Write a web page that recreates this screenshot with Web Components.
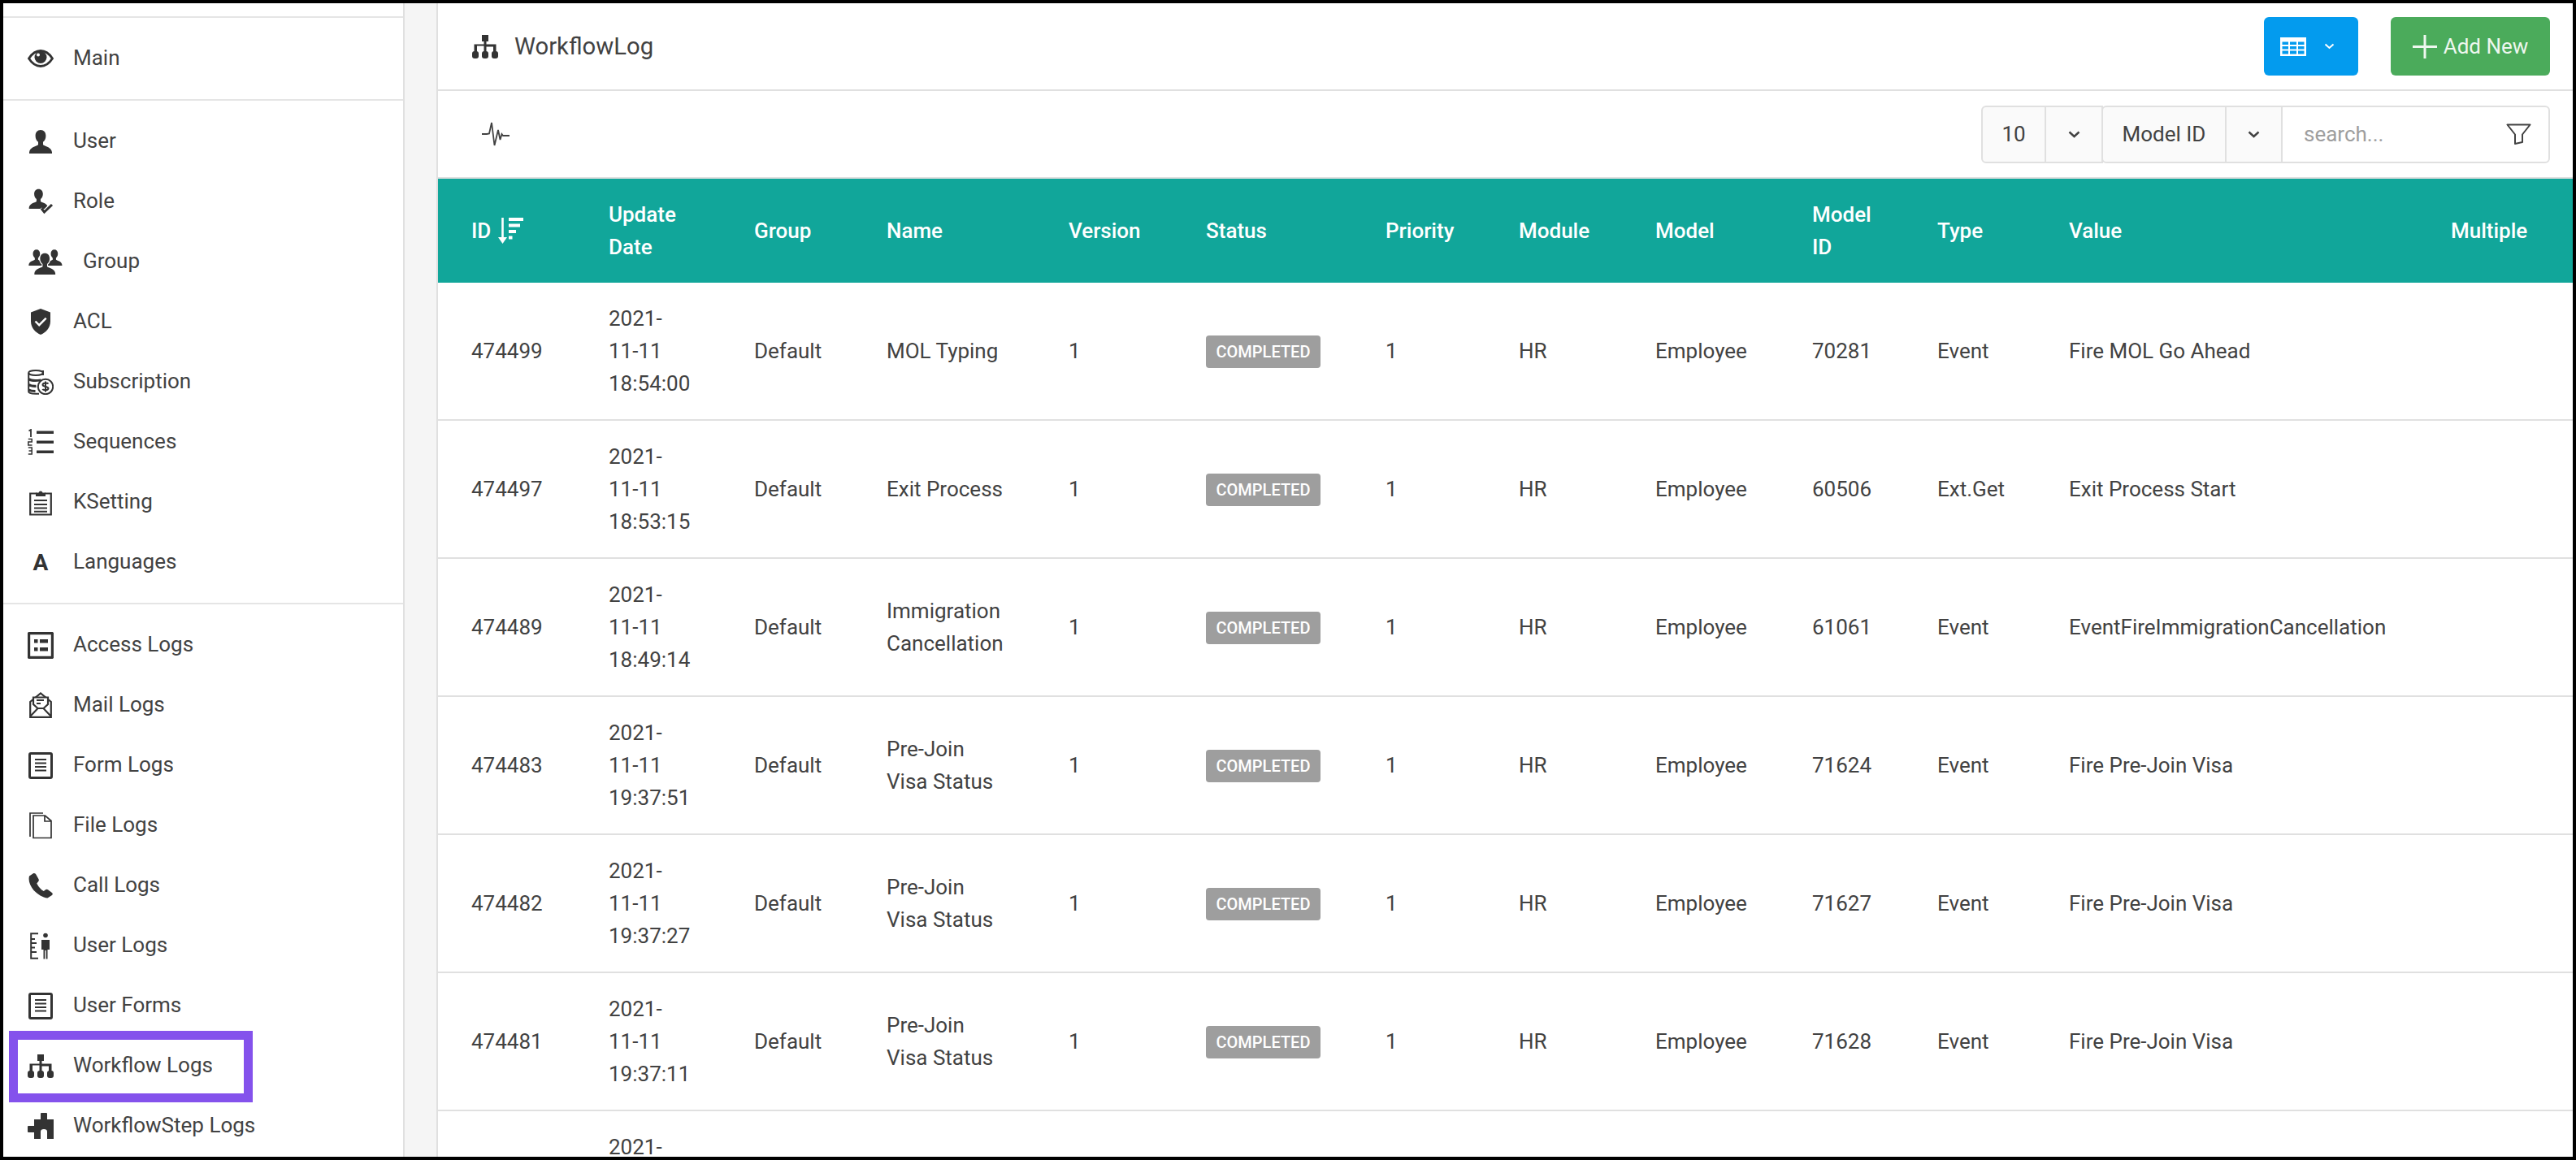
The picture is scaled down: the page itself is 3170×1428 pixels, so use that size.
<!DOCTYPE html>
<html lang="en">
<head>
<meta charset="utf-8">
<title>WorkflowLog</title>
<style>
  html, body { margin: 0; height: 100%; overflow: hidden; background: #000; }
  body { font-family: Roboto, "Liberation Sans", sans-serif; }
</style>
</head>
<body>
<app-frame>
  <side-nav slot="nav">
    <nav-group>
      <nav-item icon="eye">Main</nav-item>
    </nav-group>
    <nav-group>
      <nav-item icon="user">User</nav-item>
      <nav-item icon="role">Role</nav-item>
      <nav-item icon="group">Group</nav-item>
      <nav-item icon="shield">ACL</nav-item>
      <nav-item icon="subscription">Subscription</nav-item>
      <nav-item icon="sequences">Sequences</nav-item>
      <nav-item icon="clipboard">KSetting</nav-item>
      <nav-item icon="letter">Languages</nav-item>
    </nav-group>
    <nav-group>
      <nav-item icon="list">Access Logs</nav-item>
      <nav-item icon="mail">Mail Logs</nav-item>
      <nav-item icon="form">Form Logs</nav-item>
      <nav-item icon="files">File Logs</nav-item>
      <nav-item icon="phone">Call Logs</nav-item>
      <nav-item icon="userlog">User Logs</nav-item>
      <nav-item icon="form">User Forms</nav-item>
      <nav-item icon="sitemap" highlight>Workflow Logs</nav-item>
      <nav-item icon="puzzle">WorkflowStep Logs</nav-item>
    </nav-group>
  </side-nav>
  <page-header slot="main">WorkflowLog</page-header>
  <list-toolbar slot="main"></list-toolbar>
  <log-table slot="main"></log-table>
</app-frame>

<script>
(() => {
  const person = 'M16 2c-4 0-6.400 3-6.400 7.300 0 3.400 1.400 6 3.400 7.500v3.400C10 22.300 2.500 23.300 2 29.500V31h28v-1.500c-.5-6.200-8-7.200-11-9.300v-3.400c2-1.500 3.400-4.100 3.400-7.500C22.400 5 20 2 16 2z';

  // every icon: [width, height, inner svg], drawn 1:1 in pixels
  const ICONS = {
    eye: [32, 22, `<path d="M1.500 11C6 4 11 1.500 16 1.500S26 4 30.500 11C26 18 21 20.500 16 20.500S6 18 1.500 11z" fill="none" stroke="currentColor" stroke-width="2.800"/><circle cx="16" cy="9.500" r="7.500"/><circle cx="13" cy="6.500" r="2" fill="#fff"/>`],
    user: [32, 32, `<path d="${person}"/>`],
    role: [32, 32, `<g transform="translate(0 -1) scale(.84)"><path d="${person}"/></g><path d="M15 25.500l4.500 5 11-11" fill="none" stroke="#fff" stroke-width="6"/><path d="M17 24.500l3.500 4.500 9.500-9" fill="none" stroke="currentColor" stroke-width="3"/>`],
    group: [44, 32, `<g transform="scale(.68)"><path d="${person}"/></g><g transform="translate(22 0) scale(.68)"><path d="${person}"/></g><g transform="translate(6.500 4) scale(.92 .9)"><path d="${person}" stroke="#fff" stroke-width="2.500" paint-order="stroke"/></g>`],
    shield: [26, 34, `<path d="M13 1l12 4.500v11C25 25 19 30.500 13 33 7 30.500 1 25 1 16.500v-11z"/><path d="M6.500 16.500l4.700 4.700 8.500-8.500" fill="none" stroke="#fff" stroke-width="2.400"/>`],
    subscription: [32, 31, `<g fill="none" stroke="currentColor"><ellipse cx="10" cy="4" rx="8.800" ry="3" stroke-width="2"/><path d="M1.200 4v23c0 1.800 4 2.800 8.800 2.800h4" stroke-width="2"/><path d="M1.500 11.500c2 2 7 2.500 15 1.500M1.500 18.500c2 1.500 5 2 9 1.800M1.500 25c2 1.200 4 1.500 8 1.500" stroke-width="3.200"/><path d="M19 1v6" stroke-width="2"/></g><circle cx="22" cy="21" r="9.200" fill="#fff" stroke="currentColor" stroke-width="2"/><path d="M25.500 17.500c-1-1.300-7-1.500-7 1.300 0 2.900 7 1.300 7 4.200 0 2.800-6 2.700-7.200 1M22 14.500v13" fill="none" stroke="currentColor" stroke-width="2"/>`],
    sequences: [32, 32, `<path d="M11 2.500h21v3.400H11zM11 14.500h21v3.400H11zM11 26.500h21v3.400H11z"/><path d="M1.500 2.500L4 1v9" fill="none" stroke="currentColor" stroke-width="1.800"/><path d="M.8 12.500H5.200V16H.8v4H5.500" fill="none" stroke="currentColor" stroke-width="1.500"/><path d="M.8 23H5.200v8H.8M1.500 27H5.200" fill="none" stroke="currentColor" stroke-width="1.500"/>`],
    clipboard: [28, 33, `<path d="M9 5.500H1.200v26h25.600v-26H19" fill="none" stroke="currentColor" stroke-width="2.200"/><path d="M8 9V4.500h3.500a2.600 2.600 0 0 1 5 0H20V9z"/><path d="M6 14h16M6 19h16M6 23.500h16M6 27.800h16" stroke="currentColor" stroke-width="2"/>`],
    list: [32, 33, `<rect x="1.500" y="1.500" width="29" height="30" rx="1" fill="none" stroke="currentColor" stroke-width="3.400"/><path d="M8 9h4.500v4.500H8zM15 9h10v4.500H15zM8 19h4.500v4.500H8zM15 19h10v4.500H15z"/>`],
    mail: [28, 32, `<g fill="none" stroke="currentColor" stroke-width="2.200"><path d="M1.200 12v18.800h25.600V12L14 1.500z"/><path d="M1.500 29.500l9-9.500h7l9 9.500"/><path d="M5 15V6.500h18V15L17.500 20h-7z" fill="#fff"/><path d="M9 10h9M9 14h5"/></g>`],
    form: [30, 33, `<rect x="1.500" y="1.500" width="27" height="30" rx="1.500" fill="none" stroke="currentColor" stroke-width="3"/><path d="M8 9h14M8 13.500h14M8 18h14M8 22.500h14" stroke="currentColor" stroke-width="2.200"/>`],
    files: [28, 33, `<g fill="none" stroke="currentColor" stroke-width="1.700"><path d="M5 31.500H27V10.500L19.500 4H5z"/><path d="M19 4v7h8"/><path d="M1 30V1h16"/></g>`],
    phone: [30, 31, `<path d="M5.500.500L1 3.500c-1.500 6 1 12 5.500 17.500 5 5 11 9 17 9.500l5.500-3.500c1-.8 1-2 0-3l-5-3.800c-1-.7-2-.7-3 0l-2.200 1.700c-3-1.500-7-6-8.500-9.500l2-2.400c.7-.9.700-2 .1-3L9 1c-.8-1-2.500-1.200-3.500-.5z"/>`],
    userlog: [26, 33, `<path d="M10 1.200H1.200v30.600H10M1.500 8H6M1.500 13H8M1.500 18.500H6M1.500 24H8" fill="none" stroke="currentColor" stroke-width="2"/><circle cx="19" cy="3.500" r="2.800"/><path d="M14 9h10v12h-2.500v11.500h-1.800V22h-1.400v10.500h-1.800V21H14z"/>`],
    sitemap: [32, 29, `<path d="M12 0h8v8h-2.500v3.500h12v9.500h-3.500v-6.500h-8.500V21h-3v-7.500H6V21H2.500v-9.500h12V8H12z"/><rect y="20" width="8" height="9" rx="3"/><rect x="12" y="20" width="8" height="9" rx="3"/><rect x="24" y="20" width="8" height="9" rx="3"/>`],
    puzzle: [32, 32, `<path d="M17 0h6a1 1 0 0 1 1 1v7h8v24h-8v-9a4 3 0 0 0-8 0v9H8v-8H1a1 1 0 0 1-1-1v-6a1 1 0 0 1 1-1h7V8h8V1a1 1 0 0 1 1-1z"/>`],
    chevron: [13, 8, `<path d="M1.500 1.500L6.500 6l5-4.500" fill="none" stroke="currentColor" stroke-width="2"/>`],
    caret: [15, 9, `<path d="M1.500 1.500L7.500 7l6-5.500" fill="none" stroke="currentColor" stroke-width="2.400"/>`],
    grid: [32, 23, `<path d="M0 0h32v23H0zM2.500 5.500v3.500h7.500V5.500zM12 5.500v3.500h8V5.500zM22 5.500v3.500h7.500V5.500zM2.500 11v3.500h7.500V11zM12 11v3.500h8V11zM22 11v3.500h7.500V11zM2.500 16.500v4h7.500v-4zM12 16.500v4h8v-4zM22 16.500v4h7.500v-4z" fill-rule="evenodd"/>`],
    plus: [30, 29, `<path d="M0 13h30v3H0z"/><path d="M13.500 0h3v29h-3z"/>`],
    filter: [31, 26, `<path d="M1.500 1.500h28L20 13.500v9.500l-9 2V13.500z" fill="none" stroke="currentColor" stroke-width="2" stroke-linejoin="round"/>`],
    pulse: [34, 30, `<path d="M0 15h6l3-.5L12 1l3.500 28 4.500-19 2.500 12 2-7 1.500 2h8" fill="none" stroke="currentColor" stroke-width="1.800"/>`],
    sort: [32, 32, `<path d="M6.500 0v25" stroke="currentColor" stroke-width="2.600"/><path d="M1 24h11l-5.500 8z"/><path d="M14 0h18v4H14zM14 7.500h14v4H14zM14 15h9v4h-9zM14 22.500h4.500v4H14z"/>`],
  };

  class UiIcon extends HTMLElement {
    connectedCallback() {
      const name = this.getAttribute("name");
      const root = this.shadowRoot || this.attachShadow({ mode: "open" });
      const css = `<style>:host{display:inline-flex;align-items:center;justify-content:center;flex:none;line-height:1}svg{display:block;fill:currentColor}</style>`;
      if (name === "letter") {
        root.innerHTML = `${css}<span style="font:700 28px Roboto,sans-serif;width:32px;text-align:center">A</span>`;
        return;
      }
      const [w, h, inner] = ICONS[name];
      root.innerHTML = `${css}<svg width="${w}" height="${h}" viewBox="0 0 ${w} ${h}" aria-hidden="true">${inner}</svg>`;
    }
  }

  class AppFrame extends HTMLElement {
    constructor() {
      super();
      this.attachShadow({ mode: "open" }).innerHTML = `
        <style>
          :host {
            display: grid;
            grid-template-columns: 494px 1fr;
            box-sizing: border-box;
            width: 3170px;
            height: 1428px;
            border: 4px solid #000;
            background: #f5f5f5;
            color: #424242;
            font: 400 26px/40px Roboto, "Liberation Sans", sans-serif;
            overflow: hidden;
          }
          .main {
            margin-left: 39px;
            border-left: 2px solid #e0e0e0;
            background: #fff;
            overflow: hidden;
            min-width: 0;
          }
        </style>
        <slot name="nav"></slot>
        <div class="main"><slot name="main"></slot></div>
      `;
    }
  }

  class SideNav extends HTMLElement {
    constructor() {
      super();
      this.attachShadow({ mode: "open" }).innerHTML = `
        <style>
          :host {
            display: block;
            box-sizing: border-box;
            background: #fff;
            border-right: 2px solid #e0e0e0;
            padding-top: 16px;
            height: 100%;
            position: relative;
            overflow: hidden;
          }
        </style>
        <slot></slot>
      `;
    }
  }

  class NavGroup extends HTMLElement {
    constructor() {
      super();
      this.attachShadow({ mode: "open" }).innerHTML = `
        <style>
          :host { display: block; border-top: 2px solid #e5e5e5; padding: 13px 0; }
          :host(:last-child) { padding-bottom: 0; }
        </style>
        <slot></slot>
      `;
    }
  }

  class NavItem extends HTMLElement {
    connectedCallback() {
      if (this.shadowRoot) return;
      this.attachShadow({ mode: "open" }).innerHTML = `
        <style>
          :host {
            display: flex;
            align-items: center;
            gap: 24px;
            height: 74px;
            padding-left: 30px;
            position: relative;
            white-space: nowrap;
            color: #424242;
          }
          .icon { display: flex; min-width: 32px; justify-content: center; color: #333; }
          .label { margin-top: -2px; }
          :host([highlight])::after {
            content: "";
            position: absolute;
            left: 7px;
            top: -6px;
            width: 300px;
            height: 88px;
            box-sizing: border-box;
            border: 11px solid #8452ec;
          }
        </style>
        <span class="icon"><ui-icon name="${this.getAttribute("icon")}"></ui-icon></span>
        <span class="label"><slot></slot></span>
      `;
    }
  }

  class PageHeader extends HTMLElement {
    constructor() {
      super();
      this.attachShadow({ mode: "open" }).innerHTML = `
        <style>
          :host {
            display: flex;
            align-items: center;
            box-sizing: border-box;
            height: 108px;
            padding: 0 28px 0 42px;
            border-bottom: 2px solid #e0e0e0;
          }
          .title { display: flex; align-items: center; gap: 20px; font-size: 29.25px; flex: 1; color: #424242; }
          .title ui-icon { color: #333; }
          .btn {
            display: flex;
            align-items: center;
            box-sizing: border-box;
            height: 72px;
            border-radius: 6px;
            color: #fff;
          }
          .view { width: 116px; gap: 22px; padding-left: 20px; background: #039bee; margin-right: 40px; }
          .add { width: 196px; gap: 8px; justify-content: center; background: #4bab5b; color: #eef7ef; }
        </style>
        <div class="title"><ui-icon name="sitemap"></ui-icon><span><slot></slot></span></div>
        <div class="btn view"><ui-icon name="grid"></ui-icon><ui-icon name="chevron"></ui-icon></div>
        <div class="btn add"><ui-icon name="plus"></ui-icon><span>Add New</span></div>
      `;
    }
  }

  class ListToolbar extends HTMLElement {
    constructor() {
      super();
      this.attachShadow({ mode: "open" }).innerHTML = `
        <style>
          :host {
            display: flex;
            align-items: center;
            justify-content: space-between;
            box-sizing: border-box;
            height: 108px;
            padding: 0 28px 0 54px;
            border-bottom: 2px solid #e0e0e0;
          }
          .group { display: flex; height: 71px; }
          .seg {
            display: flex;
            align-items: center;
            justify-content: center;
            box-sizing: border-box;
            background: #fafafa;
            border: 2px solid #e0e0e0;
            margin-left: -2px;
            color: #424242;
          }
          .seg:first-child { margin-left: 0; border-radius: 6px 0 0 6px; }
          .search {
            width: 331px;
            justify-content: space-between;
            padding: 0 21px 0 26px;
            background: #fff;
            border-radius: 0 6px 6px 0;
            color: #9e9e9e;
          }
          .search ui-icon { color: #424242; }
        </style>
        <ui-icon name="pulse"></ui-icon>
        <div class="group">
          <div class="seg" style="width:80px">10</div>
          <div class="seg" style="width:72px"><ui-icon name="caret"></ui-icon></div>
          <div class="seg" style="width:154px;border-radius:6px 0 0 6px">Model ID</div>
          <div class="seg" style="width:71px"><ui-icon name="caret"></ui-icon></div>
          <div class="seg search"><span>search...</span><ui-icon name="filter"></ui-icon></div>
        </div>
      `;
    }
  }

  class StatusBadge extends HTMLElement {
    constructor() {
      super();
      this.attachShadow({ mode: "open" }).innerHTML = `
        <style>
          :host {
            display: inline-block;
            box-sizing: border-box;
            height: 40px;
            min-width: 141px;
            text-align: center;
            border-radius: 4px;
            background: #9e9e9e;
            color: #fff;
            font-size: 20px;
            font-weight: 500;
            line-height: 40px;
            vertical-align: middle;
          }
        </style>
        <slot></slot>
      `;
    }
  }

  const COLUMNS = [
    ["ID", 210], ["Update<br>Date", 179], ["Group", 163], ["Name", 224], ["Version", 169],
    ["Status", 221], ["Priority", 164], ["Module", 168], ["Model", 193], ["Model<br>ID", 154],
    ["Type", 162], ["Value", 470], ["Multiple", 150],
  ];

  const ROWS = [
    ["474499", "18:54:00", "MOL Typing", "70281", "Event", "Fire MOL Go Ahead"],
    ["474497", "18:53:15", "Exit Process", "60506", "Ext.Get", "Exit Process Start"],
    ["474489", "18:49:14", "Immigration<br>Cancellation", "61061", "Event", "EventFireImmigrationCancellation"],
    ["474483", "19:37:51", "Pre-Join<br>Visa Status", "71624", "Event", "Fire Pre-Join Visa"],
    ["474482", "19:37:27", "Pre-Join<br>Visa Status", "71627", "Event", "Fire Pre-Join Visa"],
    ["474481", "19:37:11", "Pre-Join<br>Visa Status", "71628", "Event", "Fire Pre-Join Visa"],
  ];

  class LogTable extends HTMLElement {
    constructor() {
      super();
      const cols = COLUMNS.map(([, w]) => `<col style="width:${w}px">`).join("");
      const head = COLUMNS.map(([label], i) =>
        `<th>${i === 0 ? `<span class="id">${label}<ui-icon name="sort"></ui-icon></span>` : label}</th>`
      ).join("");
      const rows = ROWS.map(([id, time, name, modelId, type, value]) => `
        <tr>
          <td>${id}</td><td>2021-<br>11-11<br>${time}</td><td>Default</td><td>${name}</td><td>1</td>
          <td><status-badge>COMPLETED</status-badge></td><td>1</td><td>HR</td><td>Employee</td>
          <td>${modelId}</td><td>${type}</td><td>${value}</td><td></td>
        </tr>`).join("");
      this.attachShadow({ mode: "open" }).innerHTML = `
        <style>
          :host { display: block; }
          table { border-collapse: separate; border-spacing: 0; table-layout: fixed; width: 2627px; }
          th {
            height: 128px;
            padding: 0;
            background: #11a69a;
            color: #fff;
            font-weight: 500;
            text-align: left;
          }
          td {
            padding: 24px 0;
            border-bottom: 2px solid #e0e0e0;
            vertical-align: middle;
            white-space: nowrap;
            color: #424242;
          }
          th:first-child, td:first-child { padding-left: 41px; }
          .id { display: inline-flex; align-items: center; gap: 8px; }
        </style>
        <table>
          <colgroup>${cols}</colgroup>
          <thead><tr>${head}</tr></thead>
          <tbody>${rows}
            <tr><td></td><td>2021-<br>&nbsp;<br>&nbsp;</td></tr>
          </tbody>
        </table>
      `;
    }
  }

  customElements.define("ui-icon", UiIcon);
  customElements.define("status-badge", StatusBadge);
  customElements.define("app-frame", AppFrame);
  customElements.define("side-nav", SideNav);
  customElements.define("nav-group", NavGroup);
  customElements.define("nav-item", NavItem);
  customElements.define("page-header", PageHeader);
  customElements.define("list-toolbar", ListToolbar);
  customElements.define("log-table", LogTable);
})();
</script>
</body>
</html>
